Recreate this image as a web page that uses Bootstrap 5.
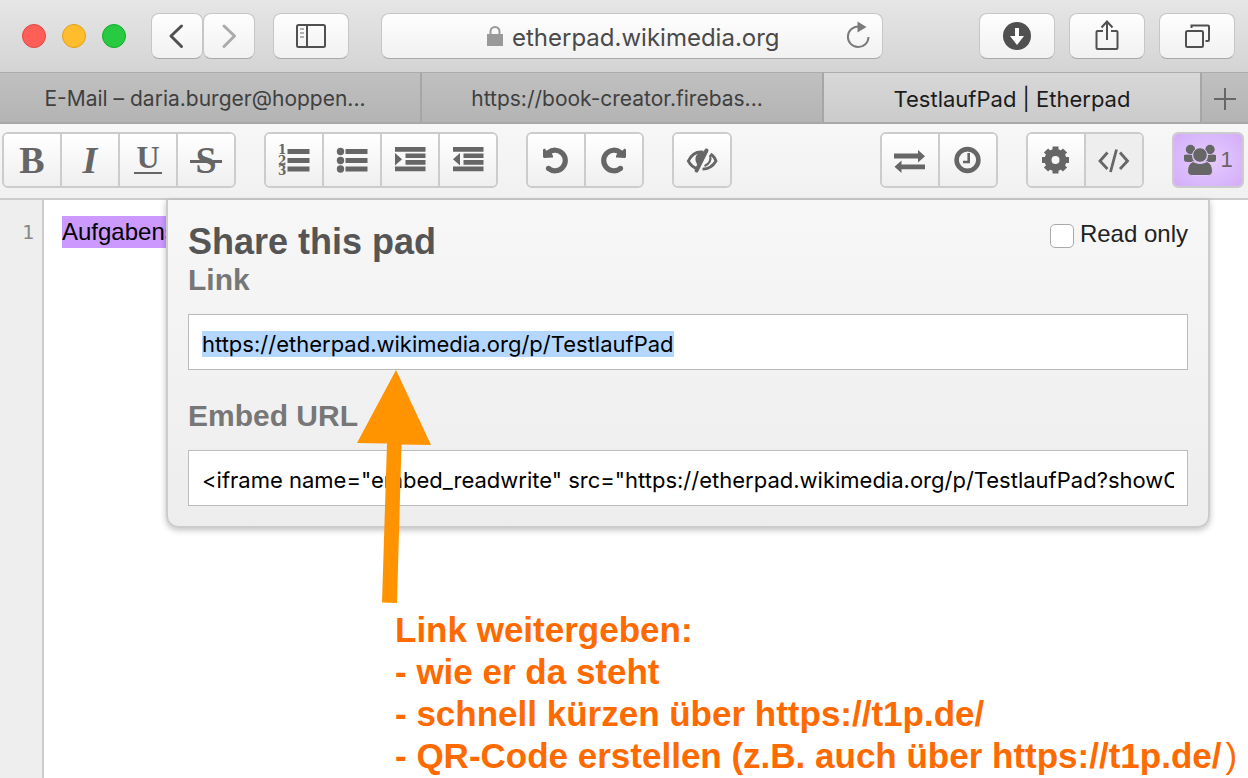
<!DOCTYPE html>
<html lang="de">
<head>
<meta charset="utf-8">
<meta name="viewport" content="width=device-width, initial-scale=1">
<title>TestlaufPad | Etherpad</title>
<link href="https://cdn.jsdelivr.net/npm/bootstrap@5.3.0/dist/css/bootstrap.min.css" rel="stylesheet">
<style>
  body { font-family: "Liberation Sans", Arial, sans-serif; background: #fff; color: #000; }
  svg { display: block; flex: none; overflow: visible; }
  .ui-font { font-family: Inter, "Open Sans", sans-serif; }

  /* browser window */
  .chrome-bar { height: 73px; padding: 0 13px 0 22px; background: linear-gradient(#e6e6e6, #d4d4d4); border-bottom: 1px solid #acacac; }
  .light { width: 24px; height: 24px; border-radius: 50%; border: 1px solid; padding: 0; }
  .light-red { background: #ff5f57; border-color: #e2463f; }
  .light-yellow { background: #ffbd2e; border-color: #e1a116; }
  .light-green { background: #28ca41; border-color: #12ac28; }
  .chrome-btn, .address { height: 46px; border: 1px solid #c6c6c6; border-bottom-color: #a9a9a9; border-radius: 8px; background: linear-gradient(#fefefe, #f1f1f1); color: #505050; }
  .chrome-btn { width: 76px; padding: 0; display: flex; align-items: center; justify-content: center; }
  .chrome-btn.half { width: 52px; }
  .nav-pair { margin: 0 18px 0 25px; }
  .address { display: grid; grid-template-columns: 1fr auto 1fr; align-items: center; margin: 0 96px 0 32px; min-width: 0; }
  .address-inner { grid-column: 2; display: flex; align-items: center; gap: 8px; }
  .address input { width: 266px; border: 0; padding: 3px 0 0; background: transparent; font-size: 24px; color: #4a4a4a; outline: 0; }
  .reload { border: 0; background: none; padding: 0; justify-self: end; margin-right: 8px; }

  .tab-strip { height: 51px; background: linear-gradient(#c0c0c0, #b4b4b4); border-bottom: 2px solid #a8a8a8; }
  .tab-item { border-right: 2px solid #a6a6a6; color: #404040; text-decoration: none; font-size: 21px; min-width: 0; flex-basis: 0; display: flex; align-items: center; justify-content: center; padding: 3px 10px 0 0; white-space: nowrap; }
  .tab-item.mail { flex-grow: 410; }
  .tab-item.book { flex-grow: 390; }
  .tab-item.current { flex-grow: 376; background: linear-gradient(#d8d8d8, #cbcbcb); color: #1c1c1c; font-size: 22px; padding-right: 0; }
  .tab-add { width: 46px; border: 0; padding: 0; background: none; display: flex; align-items: center; justify-content: center; }

  /* pad toolbar */
  .pad-bar { height: 76px; gap: 28px; padding: 8px 4px 0 2px; background: linear-gradient(#f7f7f7, #f1f1f1); border-bottom: 2px solid #ccc; }
  .tool-group { display: flex; height: 56px; border: 2px solid #ccc; border-radius: 6px; overflow: hidden; }
  .tool { width: 56px; box-sizing: content-box; border: 0; padding: 0; background: linear-gradient(#fff, #efefef); color: #666; display: flex; align-items: center; justify-content: center; font-family: "Liberation Serif", serif; font-weight: bold; font-size: 38px; line-height: 52px; }
  .tool + .tool { border-left: 2px solid #ccc; }
  .tool.pressed { background: #eee; }
  .tool.people { width: 68px; gap: 3px; background: radial-gradient(#e6ccff, #d3adf9); font: 22px "Liberation Sans", sans-serif; }
  .ruled { position: relative; display: block; }
  .ruled::after { content: ""; position: absolute; background: #666; }
  .ruled.under { font-size: 32px; line-height: 38px; height: 44px; }
  .ruled.under::after { left: -2px; right: -2px; bottom: 8px; height: 2px; }
  .ruled.through::after { left: -5px; right: -5px; top: 26px; height: 3px; }

  /* editor */
  .gutter { width: 44px; background: #eee; border-right: 2px solid #ccc; padding: 16px 8px 0 0; text-align: right; font: 20px/32px "DejaVu Sans Mono", monospace; color: #888; }
  .pad-text { padding: 16px 18px; font-size: 24px; line-height: 32px; }
  .author { background: #c9f; display: inline-block; }

  /* share popup */
  .share { position: absolute; top: 0; left: 166px; right: 38px; padding: 20px; border: 2px solid #ccc; border-top: 0; border-radius: 0 0 12px 12px; background: linear-gradient(#f7f7f7, #ededed); box-shadow: 0 2px 6px rgba(0,0,0,.25); }
  .share h1 { font-size: 36px; line-height: 44px; font-weight: bold; color: #555; margin: 0; }
  .share label.title { display: block; font-size: 30px; line-height: 32px; font-weight: bold; color: #777; }
  .share input[type=text] { display: block; width: 100%; height: 56px; margin-top: 18px; padding: 3px 13px 0; border: 1px solid #bbb; background: #fff; color: #000; font-size: 22px; line-height: 26px; outline: 0; }
  .share input::selection { background: #b3d7ff; color: #000; }
  .share .title.second { margin-top: 30px; }
  .read-only { font-size: 24px; line-height: 28px; color: #222; gap: 6px; }
  .read-only input { appearance: none; width: 24px; height: 24px; margin: 4px 0 0; border: 1px solid #aaa; border-radius: 5px; background: #fff; }

  /* notes drawn over the page */
  .arrow { position: absolute; left: 356px; top: 170px; }
  .note { position: absolute; left: 395px; top: 409px; margin: 0; font-size: 35px; line-height: 42px; font-weight: bold; color: #ff6a00; white-space: nowrap; }
</style>
</head>
<body class="d-flex flex-column min-vh-100">

<header class="ui-font">
  <div class="chrome-bar d-flex align-items-center">
    <div class="d-flex gap-3">
      <button class="light light-red" aria-label="Schließen"></button>
      <button class="light light-yellow" aria-label="Minimieren"></button>
      <button class="light light-green" aria-label="Vollbild"></button>
    </div>
    <div class="nav-pair d-flex">
      <button class="chrome-btn half" aria-label="Zurück"><svg width="32" height="32" fill="none" stroke="#505050" stroke-width="3" stroke-linecap="round" stroke-linejoin="round"><path d="M20.500 6 10 16l10.500 10.500"/></svg></button>
      <button class="chrome-btn half" aria-label="Vorwärts"><svg width="32" height="32" fill="none" stroke="#aaa" stroke-width="3" stroke-linecap="round" stroke-linejoin="round"><path d="M11 6l10.500 10L11 26.500"/></svg></button>
    </div>
    <button class="chrome-btn" aria-label="Seitenleiste"><svg width="32" height="32" fill="none" stroke="#505050" stroke-width="2"><rect x="2" y="5" width="28" height="22" rx="1.500"/><path d="M12 5v22"/><path d="M5 9h4M5 13h4M5 17h4" stroke="#999" stroke-width="1.500"/></svg></button>
    <div class="address flex-grow-1">
      <div class="address-inner">
        <svg width="18" height="22"><path d="M4.500 10V6.500a4.500 4.500 0 0 1 9 0V10" fill="none" stroke="#999" stroke-width="2"/><path d="M1 9h16v12H1z" fill="#999"/></svg>
        <input class="ui-font" type="text" value="etherpad.wikimedia.org" aria-label="Adresse">
      </div>
      <button class="reload" aria-label="Neu laden"><svg width="32" height="32"><path d="M16.500 6.500A10.300 10.300 0 1 0 26.500 17" fill="none" stroke="#7b7b7b" stroke-width="2"/><path d="M15.500 1.500 24.500 7l-9 5.500z" fill="#7b7b7b"/></svg></button>
    </div>
    <div class="d-flex" style="gap:14px">
      <button class="chrome-btn" aria-label="Downloads"><svg width="32" height="32"><circle cx="16" cy="16" r="14" fill="#505050"/><path d="M14 8h4v8h5l-7 9-7-9h5z" fill="#fff"/></svg></button>
      <button class="chrome-btn" aria-label="Teilen"><svg width="32" height="32" fill="none" stroke="#505050" stroke-width="2"><path d="M12 11H6.500a1 1 0 0 0-1 1v16a1 1 0 0 0 1 1h19a1 1 0 0 0 1-1V12a1 1 0 0 0-1-1H20M16 20V2M10.500 7.500 16 1.500l5.500 6"/></svg></button>
      <button class="chrome-btn" aria-label="Alle Tabs"><svg width="32" height="32" fill="none" stroke="#505050" stroke-width="2"><rect x="5" y="11" width="17" height="16" rx="1.500"/><path d="M10.500 8V5.500H27a1 1 0 0 1 1 1V20a1 1 0 0 1-1 1h-2.500"/></svg></button>
    </div>
  </div>
  <nav class="tab-strip d-flex" aria-label="Tabs">
    <a class="tab-item mail" href="#">E-Mail – daria.burger@hoppen...</a>
    <a class="tab-item book" href="#">https://book-creator.firebas...</a>
    <a class="tab-item current" href="#" aria-current="page">TestlaufPad | Etherpad</a>
    <button class="tab-add" aria-label="Neuer Tab"><svg width="24" height="24" stroke="#666" stroke-width="2"><path d="M1 13h22M12 2v22"/></svg></button>
  </nav>
</header>

<div class="pad-bar d-flex align-items-start" role="toolbar">
  <div class="tool-group">
    <button class="tool">B</button>
    <button class="tool fst-italic">I</button>
    <button class="tool"><span class="ruled under">U</span></button>
    <button class="tool"><span class="ruled through">S</span></button>
  </div>
  <div class="tool-group">
    <button class="tool" aria-label="Nummerierte Liste"><svg width="32" height="32" fill="#666"><path d="M9.500 5h22v5h-22zM9.500 14h22v5h-22zM9.500 22.500h22v5h-22z"/><g font-family="DejaVu Serif, serif" font-weight="bold" font-size="12"><text x="0" y="10">1</text><text x="0" y="21">2</text><text x="0" y="31">3</text></g></svg></button>
    <button class="tool" aria-label="Liste"><svg width="32" height="32" fill="#666"><path d="M9.500 5h22v5h-22zM9.500 14h22v5h-22zM9.500 22.500h22v5h-22z"/><circle cx="4.500" cy="7.500" r="3.700"/><circle cx="4.500" cy="16.500" r="3.700"/><circle cx="4.500" cy="25" r="3.700"/></svg></button>
    <button class="tool" aria-label="Einrücken"><svg width="32" height="32" fill="#666"><path d="M1 3h30.500v4.700H1zM1 22.500h30.500v4.700H1zM11.500 9.500h20V14h-20zM11.500 16h20v4.700h-20zM1 9l7 6.300L1 21.500z"/></svg></button>
    <button class="tool" aria-label="Ausrücken"><svg width="32" height="32" fill="#666"><path d="M1 3h30.500v4.700H1zM1 22.500h30.500v4.700H1zM11.500 9.500h20V14h-20zM11.500 16h20v4.700h-20zM8 9l-7 6.300 7 6.200z"/></svg></button>
  </div>
  <div class="tool-group">
    <button class="tool" aria-label="Rückgängig"><svg width="32" height="32"><path d="M8.500 24.500A10.300 10.300 0 1 0 8.500 8.500" fill="none" stroke="#666" stroke-width="5.200"/><path d="M3 5.500 4.500 4.500 7 7l3-1.500 3 6.500v1.500L4 14l-1-1z" fill="#666"/><circle cx="8.500" cy="24.300" r="2.600" fill="#666"/></svg></button>
    <button class="tool" aria-label="Wiederholen"><svg width="32" height="32"><g transform="matrix(-1 0 0 1 31 0)"><path d="M8.500 24.500A10.300 10.300 0 1 0 8.500 8.500" fill="none" stroke="#666" stroke-width="5.200"/><path d="M3 5.500 4.500 4.500 7 7l3-1.500 3 6.500v1.500L4 14l-1-1z" fill="#666"/><circle cx="8.500" cy="24.300" r="2.600" fill="#666"/></g></svg></button>
  </div>
  <div class="tool-group">
    <button class="tool" aria-label="Farben ausblenden"><svg width="32" height="32" fill="none" stroke="#666"><path d="M17.500 8.200C10 7 5 11.500 2.300 17c2.200 4 5 6.500 8.700 7.700M24.500 10c2.600 1.600 4.500 4 5.500 7-3 5.200-7.500 8-13.500 8.200" stroke-width="2.800"/><path d="M19 8.500c-9-1.500-13 7-6 14z" fill="#666" stroke="none"/><path d="M20.500 6.500 10.500 26.500" stroke-width="4" stroke-linecap="round"/><path d="M24 11c1.500 5-1 9-5.500 11" stroke-width="2"/><path d="m23.500 8-7.500 15" stroke="#f7f7f7" stroke-width="1.800"/></svg></button>
  </div>
  <div class="tool-group ms-auto">
    <button class="tool" aria-label="Import/Export"><svg width="32" height="32" fill="#666"><path d="M0 9.500h24V6l7 6.200-7 6.200V14.500H0zM31 20.500H7.500V16.500L.5 22.700l7 6.300v-3.700H31z"/></svg></button>
    <button class="tool" aria-label="Bearbeitungsverlauf"><svg width="32" height="32" fill="none" stroke="#666"><circle cx="15.500" cy="16" r="10.900" stroke-width="4.600"/><path d="M16.700 9v9H11" stroke-width="2.600"/></svg></button>
  </div>
  <div class="tool-group">
    <button class="tool" aria-label="Einstellungen"><svg width="32" height="32" fill="none" stroke="#666"><circle cx="15.500" cy="16" r="7.500" stroke-width="7"/><g stroke-width="6"><path d="M15.500 2.500V9M15.500 23v6.500M2 16h6.500M22.500 16H29M6 6.500l4 4M21 21.500l4 4M25 6.500l-4 4M10 21.500l-4 4"/></g></svg></button>
    <button class="tool pressed" aria-label="Teilen und einbetten"><svg width="32" height="32" fill="none" stroke="#666" stroke-width="2.800"><path d="M9.500 8.500 2 17l7.500 8M22 8.500l7.500 8.500-7.500 8M18.500 5.500l-6 22.500"/></svg></button>
  </div>
  <div class="tool-group">
    <button class="tool people" aria-label="Benutzer"><svg width="34" height="32" fill="#666"><circle cx="7.500" cy="5.500" r="4.700"/><circle cx="27" cy="5.500" r="4.700"/><path d="M1 11q3-1 8 0 0 4 2.500 7H4.500Q1 18 1 15.500zM33 11q-3-1-8 0 0 4-2.500 7h7q3.500 0 3.500-2.500z"/><circle cx="17" cy="11" r="7.300" stroke="#e2c7fc"/><path d="M10 17.500q7 4 14 0 5.500 2 5.500 10 0 4-4 4h-17q-4 0-4-4 0-8 5.500-10z" stroke="#e2c7fc"/></svg><span>1</span></button>
  </div>
</div>

<main class="position-relative flex-grow-1 d-flex">
  <div class="gutter">1</div>
  <div class="pad-text flex-grow-1"><span class="author">Aufgabens</span></div>

  <form class="share">
    <div class="d-flex justify-content-between align-items-start">
      <h1>Share this pad</h1>
      <label class="read-only d-flex"><input type="checkbox"> Read only</label>
    </div>
    <label class="title" for="linkinput">Link</label>
    <input class="ui-font" type="text" id="linkinput" value="https://etherpad.wikimedia.org/p/TestlaufPad" readonly>
    <label class="title second" for="embedinput">Embed URL</label>
    <input class="ui-font" type="text" id="embedinput" value='&lt;iframe name="embed_readwrite" src="https://etherpad.wikimedia.org/p/TestlaufPad?showControls=true' readonly>
  </form>

  <svg class="arrow" width="78" height="234" fill="#ff9300"><path d="M40 0 75 75l-29.500-.5L41 233l-15-.5L31 73.500 1 73z"/></svg>
  <p class="note">Link weitergeben:<br>- wie er da steht<br>- schnell kürzen über https://t1p.de/<br>- QR-Code erstellen (z.B. auch über https://t1p.de/<span class="fw-normal ms-1">)</span></p>
</main>

<script src="https://cdn.jsdelivr.net/npm/bootstrap@5.3.0/dist/js/bootstrap.bundle.min.js"></script>
<script>
  const link = document.getElementById('linkinput');
  link.focus({ preventScroll: true });
  link.select();
</script>
</body>
</html>
